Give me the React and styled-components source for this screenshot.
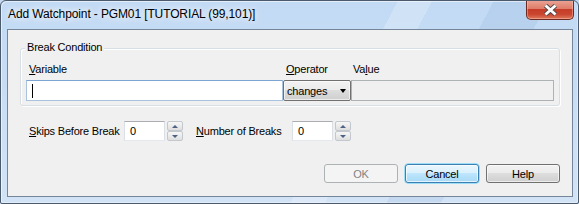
import React from "react";
import styled, { createGlobalStyle } from "styled-components";

const GlobalStyle = createGlobalStyle`
    html, body {
        margin: 0;
        padding: 0;
        background: #c4daf3;
    }
    body {
        font-family: "Liberation Sans", Arial, sans-serif;
        font-size: 11px;
        letter-spacing: -0.2px;
        color: #000;
    }
`;

const Window = styled.div`
    width: 579px;
    height: 204px;
    box-sizing: border-box;
    display: flex;
    flex-direction: column;
    border: 1px solid #4b5a6c;
    border-radius: 6px 6px 2px 2px;
    box-shadow: inset 1px 1px 0 rgba(255, 255, 255, 0.55),
        inset -1px -1px 0 rgba(255, 255, 255, 0.35);
    background:
        linear-gradient(118deg, transparent 58%, rgba(255, 255, 255, 0.22) 58%, rgba(255, 255, 255, 0.22) 63%, transparent 63%),
        linear-gradient(118deg, transparent 72%, rgba(120, 160, 205, 0.16) 72%, rgba(120, 160, 205, 0.16) 80%, transparent 80%),
        linear-gradient(180deg, #c2daf4 0%, #c6dcf4 30%, #d3e3f6 100%);
    overflow: hidden;
`;

const TitleBar = styled.div`
    height: 28px;
    flex: none;
    display: flex;
    align-items: flex-start;
    justify-content: space-between;
    padding: 0 4px 0 7px;
`;

const Title = styled.span`
    padding-top: 6px;
    font-size: 12px;
    letter-spacing: -0.12px;
    line-height: 15px;
    white-space: nowrap;
    text-shadow: 0 0 6px #fff, 0 0 10px rgba(255, 255, 255, 0.9);
`;

const CloseButton = styled.div`
    width: 48px;
    height: 20px;
    margin-top: -1px;
    box-sizing: border-box;
    border: 1px solid #6d2a22;
    border-top: none;
    border-radius: 0 0 5px 5px;
    background: linear-gradient(
        180deg,
        #eca596 0%,
        #df7d6a 45%,
        #c73d27 50%,
        #c9452f 75%,
        #e07a5c 100%
    );
    box-shadow: inset 0 0 0 1px rgba(255, 200, 190, 0.45);
    display: flex;
    align-items: center;
    justify-content: center;
`;

const Body = styled.div`
    flex: 1;
    display: flex;
    padding: 0 5px 6px 6px;
`;

const Client = styled.div`
    flex: 1;
    display: flex;
    flex-direction: column;
    border: 1px solid #75869b;
    background: #f0f0f0;
`;

const GroupBox = styled.div`
    position: relative;
    margin: 18px 0 0 12px;
    width: 540px;
    height: 58px;
    box-sizing: border-box;
    border: 1px solid #d5dfe5;
    border-radius: 3px;
    box-shadow: inset 1px 1px 0 #fff, 1px 1px 0 #fff;
    padding: 13px 5px 0 5px;
`;

const Legend = styled.span`
    position: absolute;
    top: -9px;
    left: 4px;
    padding: 0 2px;
    line-height: 14px;
    background: #f0f0f0;
`;

const FieldGrid = styled.div`
    display: grid;
    grid-template-columns: 257px 68px 203px;
    grid-template-rows: 14px 21px;
    row-gap: 4px;
`;

const FieldLabel = styled.span`
    line-height: 14px;
    padding-left: ${(p) => p.$indent || 3}px;
`;

const U = styled.span`
    text-decoration: underline;
`;

const TextField = styled.div`
    box-sizing: border-box;
    display: flex;
    align-items: center;
    padding-left: 5px;
    background: #fff;
    border: 1px solid #a9c2de;
    border-top-color: #7ea5d2;
`;

const Caret = styled.span`
    width: 1px;
    height: 14px;
    background: #000;
`;

const Combo = styled.div`
    box-sizing: border-box;
    display: flex;
    align-items: center;
    justify-content: space-between;
    padding: 0 4px 0 3px;
    border: 1px solid #707070;
    border-radius: 2px;
    background: linear-gradient(180deg, #f2f2f2 0%, #ebebeb 49%, #dddddd 50%, #cfcfcf 100%);
    box-shadow: inset 0 0 0 1px rgba(255, 255, 255, 0.6);
    line-height: 14px;
`;

const Arrow = styled.span`
    width: 0;
    height: 0;
    border-left: 3.5px solid transparent;
    border-right: 3.5px solid transparent;
    border-top: 4px solid #000;
`;

const ValueField = styled.div`
    box-sizing: border-box;
    border: 1px solid #adb2b5;
    background: #f0f0f0;
`;

const SpinRow = styled.div`
    display: flex;
    align-items: center;
    margin: 15px 0 0 21px;
    height: 20px;
`;

const SpinLabel = styled.span`
    width: ${(p) => p.$width}px;
    margin-left: ${(p) => p.$offset || 0}px;
    line-height: 14px;
    white-space: nowrap;
`;

const SpinInput = styled.div`
    width: 41px;
    height: 20px;
    box-sizing: border-box;
    display: flex;
    align-items: center;
    padding-left: 5px;
    background: #fff;
    border: 1px solid #dbdfe6;
    border-top-color: #abadb3;
    border-bottom-color: #e3e9ef;
`;

const Spinner = styled.div`
    width: 16px;
    height: 20px;
    margin-left: 2px;
    display: flex;
    flex-direction: column;
`;

const SpinButton = styled.div`
    flex: 1;
    box-sizing: border-box;
    display: flex;
    align-items: center;
    justify-content: center;
    border: 1px solid #c3c8cf;
    border-radius: 2px;
    background: linear-gradient(180deg, #f6f6f6 0%, #ebebeb 50%, #dedede 100%);
`;

const SpinArrow = styled.span`
    width: 0;
    height: 0;
    border-left: 3.5px solid transparent;
    border-right: 3.5px solid transparent;
    ${(p) =>
        p.$up
            ? "border-bottom: 3px solid #4d6185;"
            : "border-top: 3px solid #4d6185;"}
`;

const ButtonRow = styled.div`
    display: flex;
    justify-content: flex-end;
    gap: 7px;
    margin-top: 23px;
    padding-right: 12px;
`;

const Button = styled.div`
    width: 74px;
    height: 19px;
    box-sizing: border-box;
    display: flex;
    align-items: center;
    justify-content: center;
    border-radius: 3px;
    line-height: 14px;
    border: 1px solid ${(p) => (p.$disabled ? "#adb2b5" : p.$default ? "#3c7fb1" : "#707070")};
    color: ${(p) => (p.$disabled ? "#838383" : "#000")};
    background: ${(p) =>
        p.$disabled
            ? "#f4f4f4"
            : p.$default
            ? "linear-gradient(180deg, #eaf6fd 0%, #d9f0fc 49%, #bee6fd 50%, #a7d9f5 100%)"
            : "linear-gradient(180deg, #f2f2f2 0%, #ebebeb 49%, #dddddd 50%, #cfcfcf 100%)"};
    box-shadow: ${(p) =>
        p.$disabled
            ? "none"
            : p.$default
            ? "inset 0 0 0 1px rgba(255,255,255,0.7), 0 0 0 0.5px #48cafd"
            : "inset 0 0 0 1px rgba(255,255,255,0.6)"};
`;

const CloseIcon = () => (
    <svg width="15" height="12" viewBox="0 0 15 12">
        <path d="M2.5 1.5 L12.5 10.5 M12.5 1.5 L2.5 10.5" stroke="#4a4a4a" strokeWidth="4.6" />
        <path d="M2.5 1.5 L12.5 10.5 M12.5 1.5 L2.5 10.5" stroke="#fff" strokeWidth="2.8" />
    </svg>
);

const SpinBox = ({ label, mnemonic, width, offset }) => (
    <>
        <SpinLabel $width={width} $offset={offset}>
            <U>{mnemonic}</U>
            {label}
        </SpinLabel>
        <SpinInput>0</SpinInput>
        <Spinner>
            <SpinButton>
                <SpinArrow $up />
            </SpinButton>
            <SpinButton>
                <SpinArrow />
            </SpinButton>
        </Spinner>
    </>
);

const App = () => {
    return (
        <>
            <GlobalStyle />
            <Window>
                <TitleBar>
                    <Title>Add Watchpoint - PGM01 [TUTORIAL (99,101)]</Title>
                    <CloseButton>
                        <CloseIcon />
                    </CloseButton>
                </TitleBar>
                <Body>
                    <Client>
                        <GroupBox>
                            <Legend>Break Condition</Legend>
                            <FieldGrid>
                                <FieldLabel>
                                    <U>V</U>ariable
                                </FieldLabel>
                                <FieldLabel>
                                    <U>O</U>perator
                                </FieldLabel>
                                <FieldLabel $indent={2}>
                                    Va<U>l</U>ue
                                </FieldLabel>
                                <TextField>
                                    <Caret />
                                </TextField>
                                <Combo>
                                    changes
                                    <Arrow />
                                </Combo>
                                <ValueField />
                            </FieldGrid>
                        </GroupBox>
                        <SpinRow>
                            <SpinBox mnemonic="S" label="kips Before Break" width={95} />
                            <SpinBox mnemonic="N" label="umber of Breaks" width={96} offset={13} />
                        </SpinRow>
                        <ButtonRow>
                            <Button $disabled>OK</Button>
                            <Button $default>Cancel</Button>
                            <Button>Help</Button>
                        </ButtonRow>
                    </Client>
                </Body>
            </Window>
        </>
    );
};

export default App;
